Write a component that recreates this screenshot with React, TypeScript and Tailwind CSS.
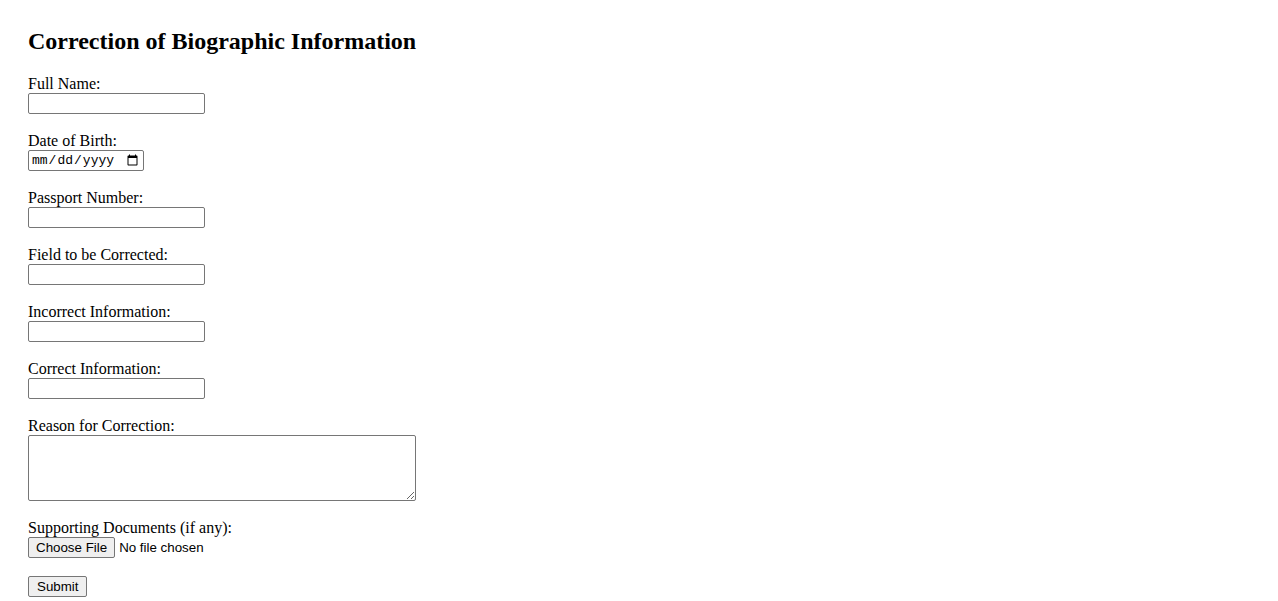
import React from 'react';

const fields = [
  { label: 'Full Name:', type: 'text' },
  { label: 'Date of Birth:', type: 'date' },
  { label: 'Passport Number:', type: 'text' },
  { label: 'Field to be Corrected:', type: 'text' },
  { label: 'Incorrect Information:', type: 'text' },
  { label: 'Correct Information:', type: 'text' },
];

const App = () => {
  return (
    <div className="min-h-screen bg-white text-black p-7 font-['Liberation_Serif',serif]">
      <h2 className="text-[24px] font-bold leading-[27px] mb-5">Correction of Biographic Information</h2>

      <form onSubmit={(e) => e.preventDefault()}>
        {fields.map((f) => (
          <div key={f.label} className="mb-[18px]">
            <label className="block text-[16px] leading-[18px]">{f.label}</label>
            {f.type === 'date' ? (
              <input
                type="date"
                className="block w-[116px] h-[21px] px-[2px] border border-[#767676] rounded-[2px] text-[13px] font-['Liberation_Mono',monospace]"
              />
            ) : (
              <input
                type="text"
                className="block w-[177px] h-[21px] px-[2px] border border-[#767676] rounded-[2px] text-[13.33px] font-['Liberation_Sans',Arial,sans-serif]"
              />
            )}
          </div>
        ))}

        {/* Reason textarea */}
        <div className="mb-[18px]">
          <label className="block text-[16px] leading-[18px]">Reason for Correction:</label>
          <textarea className="block w-[388px] h-[66px] px-[2px] border border-[#767676] rounded-[2px] text-[13.33px] font-['Liberation_Mono',monospace]" />
        </div>

        {/* File picker */}
        <div className="mb-[18px]">
          <label className="block text-[16px] leading-[18px]">Supporting Documents (if any):</label>
          <label className="flex items-center h-[21px] text-[13.33px] font-['Liberation_Sans',Arial,sans-serif] cursor-default">
            <input type="file" className="hidden" />
            <span className="h-[21px] flex items-center px-[7px] bg-[#efefef] border border-[#767676] rounded-[2px]">
              Choose File
            </span>
            <span className="ml-[4px]">No file chosen</span>
          </label>
        </div>

        <button
          type="submit"
          className="block h-[21px] px-[8px] bg-[#efefef] border border-[#767676] rounded-[2px] text-[13.33px] font-['Liberation_Sans',Arial,sans-serif]"
        >
          Submit
        </button>
      </form>
    </div>
  );
};

export default App;
